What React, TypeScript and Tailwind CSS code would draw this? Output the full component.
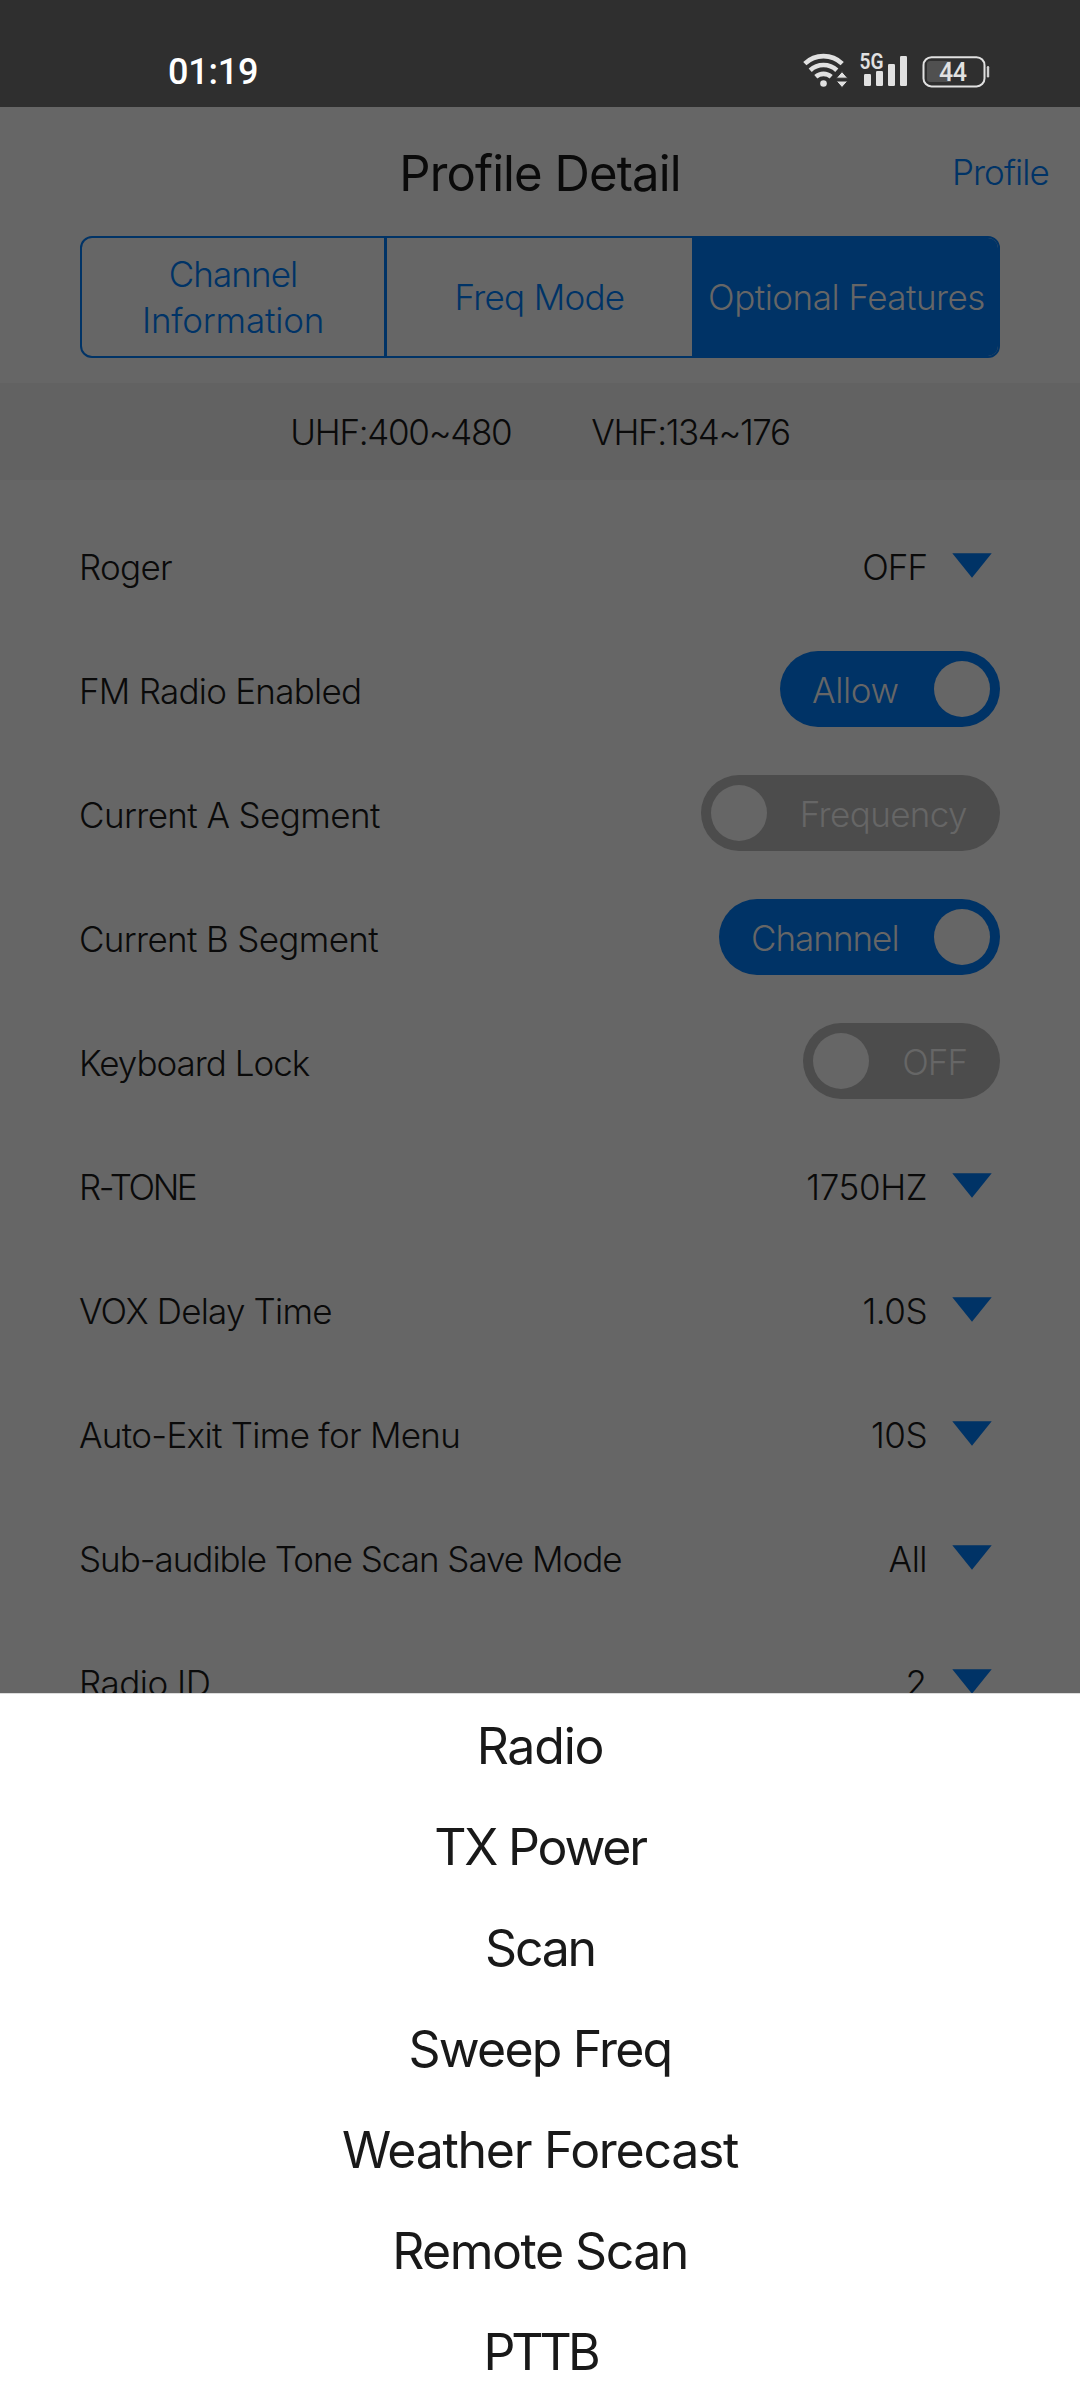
function WifiIcon() {
  return (
    <svg width="46" height="36" viewBox="0 0 46 36" fill="none" stroke="#e1e1e1">
      <path d="M1.8 10.6a27 27 0 0 1 37.4 0" strokeWidth="4.6" />
      <path d="M7.2 17.3a19.5 19.5 0 0 1 26.6 0" strokeWidth="4.6" />
      <path d="M12.8 23.8a11.6 11.6 0 0 1 15.4 0" strokeWidth="4.6" />
      <circle cx="20.5" cy="30.5" r="3.3" fill="#e1e1e1" stroke="none" />
      <path d="M39 18.6l5.8 6.6H33.2zM39 34.6l5.8-6.6H33.2z" fill="#e1e1e1" stroke="#2f2f2f" strokeWidth="1" />
    </svg>
  )
}

function SignalIcon() {
  return (
    <svg className="overflow-visible" width="48" height="34" viewBox="0 0 48 34" fill="#e1e1e1">
      <rect x="4" y="21" width="7" height="12" rx="1.2" />
      <rect x="16" y="18" width="7" height="15" rx="1.2" />
      <rect x="28" y="11" width="7" height="22" rx="1.2" />
      <rect x="40" y="3" width="7" height="30" rx="1.2" />
      <text x="-0.5" y="16" fontFamily="Roboto" fontSize="21.5" fontWeight="600" textLength="24" lengthAdjust="spacingAndGlyphs">
        5G
      </text>
    </svg>
  )
}

function BatteryIcon() {
  return (
    <svg width="68" height="32" viewBox="0 0 68 32">
      <rect x="1.5" y="1.2" width="61" height="29.2" rx="8" fill="none" stroke="#e1e1e1" strokeWidth="2" />
      <path d="M8 5h21v21H8a3 3 0 0 1-3-3V8a3 3 0 0 1 3-3z" fill="#505050" />
      <rect x="64.8" y="10" width="2.4" height="11.4" rx="1.2" fill="#cfcfcf" />
      <text x="31" y="24.6" fill="#e1e1e1" fontFamily="Roboto" fontSize="25" fontWeight="500" textAnchor="middle" textLength="28">
        44
      </text>
    </svg>
  )
}

function StatusBar() {
  return (
    <div className="flex h-[107px] shrink-0 items-start justify-between bg-[#2f2f2f] pl-[168px] pr-[90px]">
      <span className="mt-[51px] font-[Roboto,sans-serif] text-[36px] leading-[42px] font-medium tracking-[-0.2px] text-white">01:19</span>
      <div className="mt-[53px] flex items-start">
        <WifiIcon />
        <div className="ml-[11px]">
          <SignalIcon />
        </div>
        <div className="mt-[3px] ml-[14px]">
          <BatteryIcon />
        </div>
      </div>
    </div>
  )
}

interface SettingRow {
  label: string
  value: string
  type: 'select' | 'switch'
  on?: boolean
  labelClass?: string
  valueClass?: string
  switchClass?: string
}

const rows: SettingRow[] = [
  { label: 'Roger', value: 'OFF', type: 'select', labelClass: 'tracking-[-0.7px]', valueClass: 'tracking-[-1px]' },
  { label: 'FM Radio Enabled', value: 'Allow', type: 'switch', on: true, labelClass: 'tracking-[-0.75px]', valueClass: 'tracking-[-0.4px]', switchClass: 'w-[220px]' },
  { label: 'Current A Segment', value: 'Frequency', type: 'switch', labelClass: 'tracking-[-0.6px]', valueClass: 'tracking-[-0.6px]', switchClass: 'w-[299px]' },
  { label: 'Current B Segment', value: 'Channnel', type: 'switch', on: true, labelClass: 'tracking-[-0.65px]', valueClass: 'tracking-[-1px]', switchClass: 'w-[281px]' },
  { label: 'Keyboard Lock', value: 'OFF', type: 'switch', labelClass: 'tracking-[-1px]', valueClass: 'tracking-[-1px]', switchClass: 'w-[197px]' },
  { label: 'R-TONE', value: '1750HZ', type: 'select', labelClass: 'tracking-[-2.4px]', valueClass: 'tracking-[-0.4px]' },
  { label: 'VOX Delay Time', value: '1.0S', type: 'select', labelClass: 'tracking-[-0.8px]', valueClass: 'tracking-[-0.5px]' },
  { label: 'Auto-Exit Time for Menu', value: '10S', type: 'select', labelClass: 'tracking-[-0.7px]', valueClass: 'tracking-[-0.5px]' },
  { label: 'Sub-audible Tone Scan Save Mode', value: 'All', type: 'select', labelClass: 'tracking-[-1.02px]', valueClass: 'tracking-[-0.5px]' },
  { label: 'Radio ID', value: '2', type: 'select', labelClass: 'tracking-[-0.5px]' },
]

const sheetItems = [
  { label: 'Radio', className: 'tracking-[-1.2px]' },
  { label: 'TX Power', className: 'tracking-[-2.2px]' },
  { label: 'Scan', className: 'tracking-[-2.2px]' },
  { label: 'Sweep Freq', className: 'tracking-[-1.8px]' },
  { label: 'Weather Forecast', className: 'tracking-[-1.3px]' },
  { label: 'Remote Scan', className: 'tracking-[-1.5px]' },
  { label: 'PTTB', className: 'tracking-[-4px]' },
]

function Switch({ row }: { row: SettingRow }) {
  if (row.on) {
    return (
      <div className={`flex h-[76px] items-center justify-between rounded-full bg-[#003366] pr-[10px] pl-8 ${row.switchClass}`}>
        <span className={`mt-0.5 text-[#666666] ${row.valueClass ?? ''}`}>{row.value}</span>
        <div className="size-14 rounded-full bg-[#666666]" />
      </div>
    )
  }
  return (
    <div className={`flex h-[76px] items-center justify-between rounded-full bg-[#4c4c4c] pr-[33px] pl-[10px] ${row.switchClass}`}>
      <div className="size-14 rounded-full bg-[#666666]" />
      <span className={`mt-0.5 text-[#666666] ${row.valueClass ?? ''}`}>{row.value}</span>
    </div>
  )
}

function Select({ row }: { row: SettingRow }) {
  return (
    <div className="flex items-center pr-2">
      <span className={`mt-[3px] ${row.valueClass ?? ''}`}>{row.value}</span>
      <svg className="ml-[25px]" width="40" height="25" viewBox="0 0 40 25">
        <path d="M0.3 0.3h39.4L20 24.7z" fill="#003366" />
      </svg>
    </div>
  )
}

export default function App() {
  return (
    <div className="flex h-[2400px] w-[1080px] flex-col overflow-hidden bg-[#666666] font-[Inter,sans-serif] text-[35px] leading-[46px] font-[320] whitespace-nowrap text-[#0a0a0a]">
      <StatusBar />

      {/* Title bar */}
      <header className="grid h-[129px] shrink-0 grid-cols-[1fr_auto_1fr] items-center px-[31px]">
        <h1 className="col-start-2 mt-1 text-[49px] leading-[60px] font-normal tracking-[-0.9px]">Profile Detail</h1>
        <a className="mt-px justify-self-end tracking-[-0.9px] text-[#003366]">Profile</a>
      </header>

      {/* Tabs */}
      <nav className="mx-20 grid h-[122px] shrink-0 grid-cols-[305px_305px_1fr] overflow-hidden rounded-xl border-2 border-[#003366] text-center text-[#003366]">
        <div className="flex flex-col justify-center border-r-[3px] border-[#003366]">
          <span className="tracking-[-0.9px]">Channel</span>
          <span className="tracking-[-0.2px]">Information</span>
        </div>
        <div className="flex items-center justify-center">
          <span className="tracking-[-0.7px]">Freq Mode</span>
        </div>
        <div className="flex items-center justify-center bg-[#003366] pl-[3px] text-[#666666]">
          <span className="tracking-[-0.5px]">Optional Features</span>
        </div>
      </nav>

      {/* Band ranges */}
      <div className="mt-[25px] flex h-[97px] shrink-0 items-center justify-center gap-20 bg-[#626262]">
        <span className="tracking-[-1.3px]">UHF:400~480</span>
        <span className="tracking-[-1.4px]">VHF:134~176</span>
      </div>

      {/* Settings list, cut off by the sheet */}
      <main className="h-[1213px] shrink-0 overflow-hidden pt-[23px] pr-20 pl-[79px]">
        {rows.map((row) => (
          <div key={row.label} className="flex h-[124px] items-center justify-between">
            <span className={`mt-[3px] ${row.labelClass ?? ''}`}>{row.label}</span>
            {row.type === 'switch' ? <Switch row={row} /> : <Select row={row} />}
          </div>
        ))}
      </main>

      {/* Bottom sheet */}
      <div className="flex grow flex-col border-t border-[#dcdcdc] bg-white pt-px text-center text-[50px] font-normal text-[#191919]">
        {sheetItems.map((item) => (
          <div key={item.label} className="flex h-[101px] shrink-0 items-center justify-center">
            <span className={item.className}>{item.label}</span>
          </div>
        ))}
      </div>
    </div>
  )
}
